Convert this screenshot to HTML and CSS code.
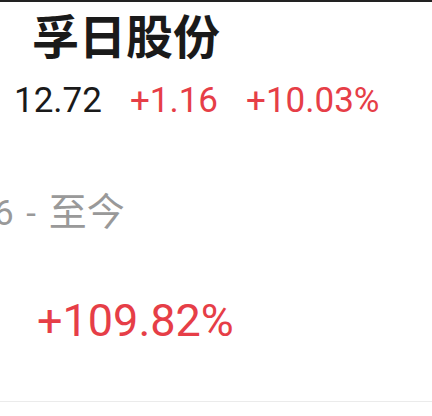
FILE: index.html
```html
<!DOCTYPE html>
<html lang="zh-CN">
<head>
    <meta charset="UTF-8">
    <meta name="viewport" content="width=device-width, initial-scale=1.0">
    <title>孚日股份</title>
    <link rel="stylesheet" href="styles.css">
</head>
<body>
    <div class="card">
        <h1 class="stock-name">孚日股份</h1>
        <div class="quote">
            <span class="price">12.72</span>
            <span class="up">+1.16</span>
            <span class="up">+10.03%</span>
        </div>
        <div class="period">6 - <span class="period-cn">至今</span></div>
        <div class="total up">+109.82%</div>
    </div>
</body>
</html>
```

FILE: styles.css
```css
body {
    margin: 0;
    background: #fff;
    font-family: Roboto, "Noto Sans CJK SC", sans-serif;
    overflow: hidden;
}
.card {
    border-top: 2px solid #222;
    border-bottom: 1px solid #ebebeb;
    padding: 4px 0 55px;
}
.stock-name {
    margin: 0 0 0 32px;
    font-family: "Noto Sans CJK SC", sans-serif;
    font-size: 47px;
    font-weight: 700;
    line-height: 56px;
    color: #1a1a1a;
}
.quote {
    display: flex;
    gap: 28px;
    margin: 19px 0 0 14px;
    font-size: 35px;
    line-height: 40px;
}
.price {
    color: #1a1a1a;
}
.up {
    color: #e63e47;
}
.period {
    height: 42px;
    margin: 69px 0 0 -6px;
    font-size: 35px;
    line-height: 42px;
    color: #999;
    white-space: nowrap;
    word-spacing: 4px;
}
.period-cn {
    font-family: "Noto Sans CJK SC", sans-serif;
    font-size: 38px;
    line-height: 1;
}
.total {
    margin: 64px 0 0 37px;
    font-size: 45px;
    line-height: 50px;
}
```
